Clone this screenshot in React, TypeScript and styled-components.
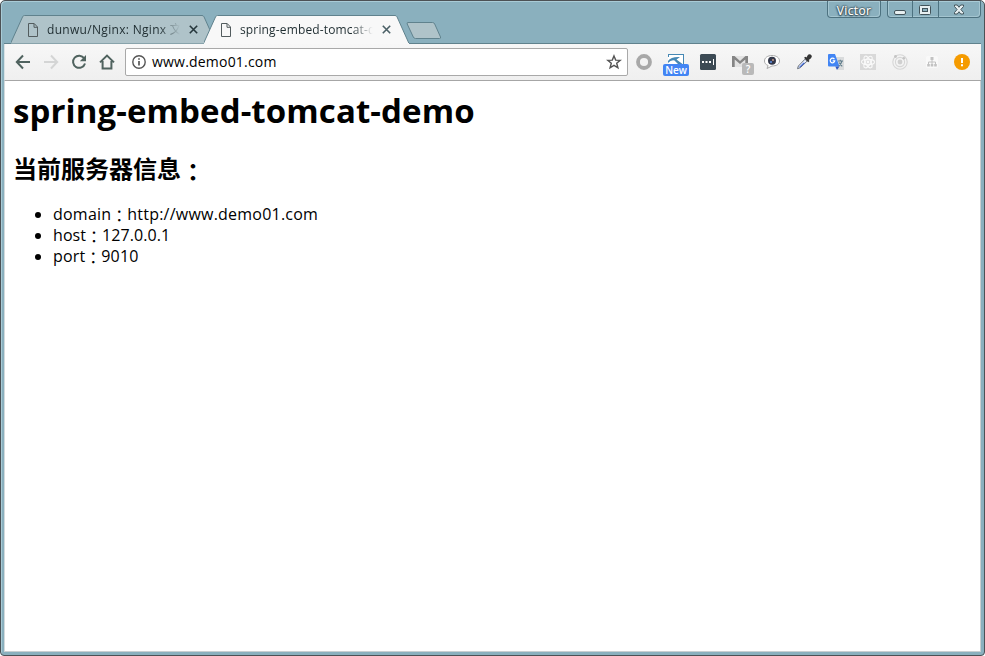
import React from 'react';
import styled, { createGlobalStyle } from 'styled-components';

const Global = createGlobalStyle`
  html, body { margin: 0; padding: 0; background: #fff; overflow: hidden; }
  *, *::before, *::after { box-sizing: border-box; }
`;

const ui = `'Open Sans', 'Noto Sans CJK SC', sans-serif`;

const Window = styled.div`
  width: 985px;
  height: 656px;
  display: flex;
  flex-direction: column;
  padding: 0 3px 3px;
  background: #8ab0be;
  border: 1px solid #4c5155;
  border-radius: 5px 5px 4px 4px;
  box-shadow: inset 1px 1px 0 #a9cbd6;
  font-family: ${ui};
  overflow: hidden;
`;

const Header = styled.header`
  height: 43px;
  flex: none;
  display: flex;
  justify-content: space-between;
  border-bottom: 1px solid #60828d;
`;

const TabStrip = styled.div`
  display: flex;
  height: 43px;
  padding: 14px 0 0 7px;
`;

const TabBox = styled.div<{ $active?: boolean }>`
  position: relative;
  z-index: ${p => (p.$active ? 2 : 1)};
  width: 206px;
  height: 29px;
  margin-right: ${p => (p.$active ? 0 : -13)}px;
  display: flex;
  align-items: center;
  padding: 0 12px 0 17px;
`;

const TabShape = styled.svg`
  position: absolute;
  inset: 0;
  width: 206px;
  height: 29px;
`;

const TabIcon = styled.svg`
  position: relative;
  width: 10px;
  height: 14px;
  flex: none;
`;

const TabTitle = styled.span<{ $spacing: number }>`
  position: relative;
  width: 134px;
  flex: none;
  margin-left: 9px;
  overflow: hidden;
  white-space: nowrap;
  font-size: 12px;
  line-height: 18px;
  letter-spacing: ${p => p.$spacing}px;
  color: #1f2d31;
  mask-image: linear-gradient(to right, #000 112px, transparent 133px);
`;

const CloseIcon = styled.svg`
  position: relative;
  flex: none;
  width: 9px;
  height: 9px;
  margin-left: 8px;
`;

const NewTab = styled.svg`
  width: 36px;
  height: 18px;
  margin: 7px 0 0 -4px;
`;

const Caption = styled.div`
  display: flex;
  gap: 6px;
  align-items: flex-start;
`;

const CaptionGroup = styled.div`
  display: flex;
  height: 17px;
  border: 1px solid #4d7280;
  border-top: 0;
  border-radius: 0 0 4px 4px;
  box-shadow: inset 1px 0 0 #a4c5d0, inset -1px -1px 0 #a4c5d0;
`;

const UserButton = styled.div`
  width: 52px;
  text-align: center;
  font-size: 12px;
  line-height: 19px;
  letter-spacing: 0.35px;
  color: #fff;
  -webkit-text-stroke: 0.2px #fff;
  text-shadow: 0 0 1px #263b43, 0 0 2px #263b43, 0 0 2px #263b43, 0 1px 2px #263b43;
`;

const CaptionButton = styled.div<{ $w: number }>`
  width: ${p => p.$w}px;
  display: flex;
  justify-content: center;
  & + & { border-left: 1px solid #4d7280; }
`;

const Toolbar = styled.div`
  height: 37px;
  flex: none;
  display: flex;
  align-items: center;
  padding-left: 10px;
  border-left: 1px solid #d8e2e5;
  border-bottom: 1px solid #a6a6a6;
  background: linear-gradient(#f7f7f7, #efefef);
`;

const Nav = styled.div`
  display: flex;
  gap: 12px;
  svg { display: block; width: 16px; height: 16px; }
`;

const Omnibox = styled.div`
  width: 503px;
  height: 28px;
  margin-left: 10px;
  padding: 0 6px;
  display: flex;
  align-items: center;
  border: 1px solid #a9a9a9;
  border-radius: 2px;
  background: #fff;
`;

const Url = styled.span`
  flex: 1;
  margin-left: 4px;
  font-size: 14px;
  line-height: 20px;
  letter-spacing: 0.2px;
  color: #000;
`;

const Icon16 = styled.svg`
  display: block;
  width: 16px;
  height: 16px;
  flex: none;
  overflow: visible;
`;

const Extensions = styled.div`
  display: flex;
  gap: 16px;
  margin-left: 8px;
  > ${Icon16}:last-child { margin-left: -2px; }
`;

const ExtensionSlot = styled.div`
  position: relative;
  width: 16px;
  height: 16px;
`;

const Badge = styled.span<{ $new?: boolean }>`
  position: absolute;
  left: ${p => (p.$new ? -5 : 10)}px;
  top: ${p => (p.$new ? 10 : 9)}px;
  width: ${p => (p.$new ? 26 : 12)}px;
  height: 12px;
  border-radius: 2px;
  background: ${p => (p.$new ? '#4285f4' : '#b9b9b9')};
  color: #fff;
  font-size: 10px;
  font-weight: 600;
  line-height: 12px;
  text-align: center;
`;

const Page = styled.main`
  flex: 1;
  padding: 8px 8px;
  background: #fff;
  border-left: 1px solid #d3dadc;
  border-right: 1px solid #c9cfd1;
  border-bottom: 1px solid #c9cfd1;
  color: #000;
`;

const Title = styled.h1`
  margin: 0;
  font-size: 33px;
  line-height: 43px;
  font-weight: 700;
  letter-spacing: 0.1px;
`;

const Subtitle = styled.h2`
  margin: 20px 0 0;
  font-family: 'Noto Sans CJK SC', sans-serif;
  font-size: 24px;
  line-height: 32px;
  font-weight: 700;
`;

const List = styled.ul`
  margin: 20px 0 0;
  padding: 0 0 0 40px;
  font-size: 16px;
  line-height: 21px;
`;

const Item = styled.li<{ $spacing: number }>`
  height: 21px;
  letter-spacing: ${p => p.$spacing}px;
`;

const Colon = styled.span`
  display: inline-block;
  height: 1em;
  font-family: 'Noto Sans CJK TC', sans-serif;
  letter-spacing: 0;
  line-height: 1;
  transform: translateY(0.12em);
`;

const rows = [
  { name: 'domain', value: 'http://www.demo01.com', spacing: 0.22 },
  { name: 'host', value: '127.0.0.1', spacing: 0.08 },
  { name: 'port', value: '9010', spacing: 0.15 },
];

function Tab({ title, active, spacing }: { title: string; active?: boolean; spacing: number }) {
  return (
    <TabBox $active={active}>
      <TabShape viewBox="0 0 206 29">
        <path
          d="M-.5 28.5 11.6 1.8Q12.2.5 13.4.5H191Q192.3.5 193 1.8L205 28.5"
          fill={active ? '#f8f8f8' : '#afc3c9'}
          stroke="#60828d"
        />
        {active && <path d="M0 28.5H205" stroke="#f8f8f8" />}
      </TabShape>
      <TabIcon viewBox="0 0 10 14" fill="none" stroke="#535c5e">
        <path d="M.5.5H6.2L9.5 4V13.5H.5ZM6 .8V4.3H9.4" />
      </TabIcon>
      <TabTitle $spacing={spacing}>{title}</TabTitle>
      <CloseIcon viewBox="0 0 9 9" stroke={active ? '#4b6066' : '#26373c'} strokeWidth="1.6">
        <path d="M.8.8 8.2 8.2M8.2.8.8 8.2" />
      </CloseIcon>
    </TabBox>
  );
}

export default function App() {
  return (
    <>
      <Global />
      <Window>
        <Header>
          <TabStrip>
            <Tab title="dunwu/Nginx: Nginx 文档" spacing={0.31} />
            <Tab title="spring-embed-tomcat-demo" active spacing={0.15} />
            <NewTab viewBox="0 0 36 18">
              <path
                d="M2 .5H26.5Q28 .5 28.7 2L34.5 15Q35 16.5 33.5 16.5H9.5Q8 16.5 7.3 15L1.2 2Q.6.5 2 .5Z"
                fill="#afc3c9"
                stroke="#60828d"
              />
            </NewTab>
          </TabStrip>
          <Caption>
            <CaptionGroup>
              <UserButton>Victor</UserButton>
            </CaptionGroup>
            <CaptionGroup>
              <CaptionButton $w={24}>
                <svg width="12" height="17" viewBox="0 0 12 17">
                  <rect x=".5" y="9.5" width="11" height="4" rx="1.5" fill="#e7eff1" stroke="#43545b" />
                </svg>
              </CaptionButton>
              <CaptionButton $w={26}>
                <svg width="13" height="17" viewBox="0 0 13 17">
                  <rect x=".5" y="4.5" width="11" height="9" rx="1" fill="#e7eff1" stroke="#43545b" />
                  <rect x="3.5" y="7.5" width="5" height="3" fill="#8ab0be" stroke="#43545b" />
                </svg>
              </CaptionButton>
              <CaptionButton $w={42}>
                <svg width="13" height="17" viewBox="0 0 13 17" fill="none">
                  <path d="M1.5 4H4.3L6 6.3 7.7 4H10.5V5.5L7.9 8.5 10.5 11.5V13H7.7L6 10.7 4.3 13H1.5V11.5L4.1 8.5 1.5 5.5Z" fill="#e7eff1" stroke="#43545b" />
                </svg>
              </CaptionButton>
            </CaptionGroup>
          </Caption>
        </Header>

        <Toolbar>
          <Nav>
            <svg viewBox="0 0 16 16" fill="none" stroke="#50635f" strokeWidth="2">
              <path d="M15 8H2.5M8 1.5 1.8 8 8 14.5" />
            </svg>
            <svg viewBox="0 0 16 16" fill="none" stroke="#d4d5d5" strokeWidth="2">
              <path d="M1 8H13.5M8 1.5 14.2 8 8 14.5" />
            </svg>
            <svg viewBox="0 0 16 16" fill="none" stroke="#50635f" strokeWidth="2">
              <path d="M13.2 4.3A6.1 6.1 0 1 0 14 9.5" />
              <path d="M15 1V7.2H8.8Z" fill="#50635f" stroke="none" />
            </svg>
            <svg viewBox="0 0 16 16" fill="none" stroke="#50635f" strokeWidth="2">
              <path d="M1 8.4 8 1.6 15 8.4M3.6 7V14.5H12.4V7" />
            </svg>
          </Nav>
          <Omnibox>
            <Icon16 viewBox="0 0 16 16" fill="none" stroke="#555" strokeWidth="1.4">
              <circle cx="7" cy="8" r="6.2" />
              <path d="M7 7V11.5M7 4.3V5.8" strokeWidth="1.7" />
            </Icon16>
            <Url>www.demo01.com</Url>
            <Icon16 viewBox="0 0 16 16" fill="none" stroke="#555" strokeWidth="1.4">
              <path d="M9 1.9 10.7 6.1 15.2 6.4 11.7 9.3 12.9 13.8 9 11.3 5.1 13.8 6.3 9.3 2.8 6.4 7.3 6.1Z" />
            </Icon16>
          </Omnibox>
          <Extensions>
            <Icon16 viewBox="0 0 16 16">
              <circle cx="8" cy="8" r="6" fill="none" stroke="#a8a8a8" strokeWidth="3.8" />
            </Icon16>
            <ExtensionSlot>
              <Icon16 viewBox="0 0 16 16">
                <path d="M0 0H16V10H0Z" fill="#fff" />
                <path d="M0 0H16V1H0ZM0 0H1V3H0ZM0 7Q3 2.5 12 3L8.5 5.5 14.5 10H10L6.5 6.4Q3 5.5 0 9ZM15 0H16V10H15Z" fill="#4688b4" />
              </Icon16>
              <Badge $new>New</Badge>
            </ExtensionSlot>
            <Icon16 viewBox="0 0 16 16">
              <rect width="16" height="16" rx="1.5" fill="#3c4a54" />
              <path d="M2 7H4V9H2ZM5.5 7H7.5V9H5.5ZM9 7H11V9H9ZM13 5H14V11H13Z" fill="#fff" />
            </Icon16>
            <ExtensionSlot>
              <Icon16 viewBox="0 0 16 16">
                <path d="M0 2H16V13H0Z" fill="#e3e3e3" />
                <path d="M0 2H2.5L8 7 13.5 2H16V13H13.3V5.5L8 10 2.7 5.5V13H0Z" fill="#858585" />
              </Icon16>
              <Badge>?</Badge>
            </ExtensionSlot>
            <Icon16 viewBox="0 0 16 16">
              <path d="M8 1.5C12.5 1.5 15.5 3.8 15.5 7S12.5 12 8 12L3 14.5 4.1 11.5C1.5 10.5.5 9 .5 7 .5 3.8 3.5 1.5 8 1.5Z" fill="#fff" stroke="#aaa" />
              <circle cx="8" cy="6.7" r="4" fill="#323749" />
              <path d="M6 7H8V9H6Z" fill="#577cc0" />
              <path d="M8 5H10V7H8Z" fill="#a2827c" />
            </Icon16>
            <Icon16 viewBox="0 0 16 16">
              <path d="M1.5 14.7 2.4 12 9 5.2 11 7.2 4.3 13.7Z" fill="#e8efff" stroke="#69717c" />
              <path d="M3.2 13 7.4 8.7H9L4 13.6Z" fill="#315dd7" />
              <path d="M8 3.8 9.5 2.7 10.5 3.6 12 .8Q14-.2 15.3 1.1T15 4.3L12.7 6 13.5 7 12.2 8.2Z" fill="#353535" />
            </Icon16>
            <Icon16 viewBox="0 0 16 16">
              <path d="M6 3H16V16H10Z" fill="#d9dbdc" />
              <path d="M0 1Q0 0 1 0H7L11.5 12.5H1Q0 12.5 0 11.5Z" fill="#4285f4" />
              <path d="M7.3 12.5H11.4L9 16Z" fill="#3157bd" />
              <path d="M6.4 5.2A2.3 2.3 0 1 0 6.8 6.8H4.7" fill="none" stroke="#fff" strokeWidth="1.2" />
              <path d="M10 7H15M12.3 5.7V7M14 7Q13 10.5 10.7 12M11 8.5 14.2 12.3" fill="none" stroke="#607d8b" strokeWidth="1.1" />
            </Icon16>
            <Icon16 viewBox="0 0 16 16">
              <rect width="16" height="16" fill="#d9d9d9" />
              <g fill="none" stroke="#fafafa" strokeWidth="1.1">
                <ellipse cx="8" cy="8" rx="6.5" ry="2.7" />
                <ellipse cx="8" cy="8" rx="6.5" ry="2.7" transform="rotate(60 8 8)" />
                <ellipse cx="8" cy="8" rx="6.5" ry="2.7" transform="rotate(120 8 8)" />
              </g>
              <circle cx="8" cy="8" r="1.4" fill="#fafafa" />
            </Icon16>
            <Icon16 viewBox="0 0 16 16">
              <g fill="none" stroke="#d6d6d6" strokeWidth="1.1">
                <circle cx="8" cy="8" r="7.2" />
                <circle cx="8" cy="8" r="4.6" />
              </g>
              <circle cx="8" cy="8" r="2.4" fill="#d0d0d0" />
              <circle cx="3.5" cy="2.5" r="1.4" fill="#c4c4c4" />
              <circle cx="11.8" cy="4.3" r="1.3" fill="#c4c4c4" />
            </Icon16>
            <Icon16 viewBox="0 0 16 16">
              <rect x="2" y="2" width="12" height="12" rx="2" fill="#f9f9f9" />
              <path d="M8 5V11M4.5 11V8H11.5V11" fill="none" stroke="#c2c2c2" />
              <path d="M6.5 3H9.5V6H6.5ZM3.2 10H5.8V12.5H3.2ZM6.7 10H9.3V12.5H6.7ZM10.2 10H12.8V12.5H10.2Z" fill="#c2c2c2" />
            </Icon16>
            <Icon16 viewBox="0 0 16 16">
              <circle cx="8" cy="8" r="8" fill="#f59b00" />
              <path d="M7 4H9V9H7ZM7 10.2H9V12.2H7Z" fill="#fff" />
            </Icon16>
          </Extensions>
        </Toolbar>

        <Page>
          <Title>spring-embed-tomcat-demo</Title>
          <Subtitle>
            当前服务器信息<Colon>：</Colon>
          </Subtitle>
          <List>
            {rows.map(row => (
              <Item key={row.name} $spacing={row.spacing}>
                {row.name}
                <Colon>：</Colon>
                {row.value}
              </Item>
            ))}
          </List>
        </Page>
      </Window>
    </>
  );
}
